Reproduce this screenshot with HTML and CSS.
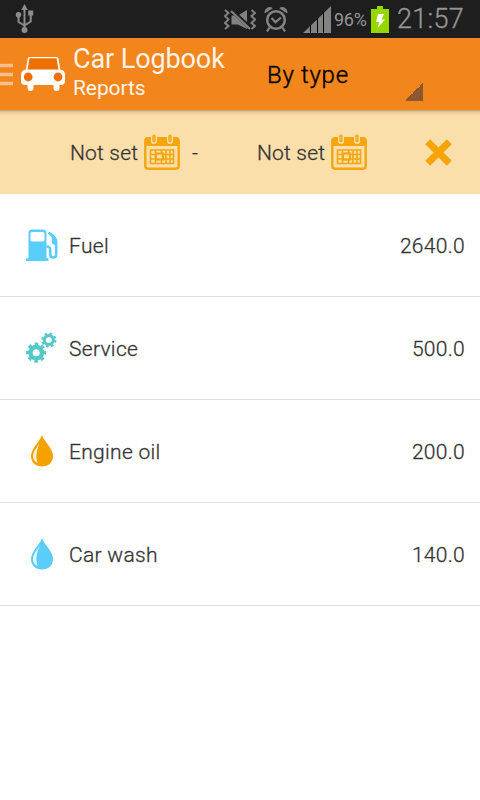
FILE: index.html
```html
<!DOCTYPE html>
<html lang="en">
<head>
    <meta charset="UTF-8">
    <meta name="viewport" content="width=device-width, initial-scale=1.0">
    <title>Car Logbook</title>
    <link rel="stylesheet" href="styles.css">
</head>
<body>
    <!-- Shared icons -->
    <svg class="icon_defs" width="0" height="0">
        <symbol id="calendar" viewBox="0 0 36 36">
            <rect x="1.3" y="4.3" width="33.4" height="30.4" rx="2.6" fill="none" stroke="#f5a60c" stroke-width="2.4"/>
            <path d="M1 12V6.500a3 3 0 0 1 3-3h28a3 3 0 0 1 3 3V12z" fill="#f5a60c"/>
            <path d="M10 2.500v4.500M26 2.500v4.500" stroke="#fbdfab" stroke-width="6" stroke-linecap="round"/>
            <path d="M10 2.300v4.300M26 2.300v4.300" stroke="#f5a60c" stroke-width="3.400" stroke-linecap="round"/>
            <path d="M10 3v3M26 3v3" stroke="#fbdfab" stroke-width=".6" stroke-linecap="round"/>
            <path d="M6.500 16h23v13.500h-23zM6.500 20.500h23M6.500 25h23M11.500 16v13.500M17.500 16v13.500M22 16v13.500M26 16v13.500" fill="none" stroke="#f5a60c" stroke-width="1.600"/>
            <rect x="12" y="19.500" width="7" height="6" fill="#fbdfab" stroke="#f5a60c" stroke-width="2.200"/>
        </symbol>
        <symbol id="drop" viewBox="0 0 22 32">
            <path d="M11 .3C9 6.500 0 13.500 0 21 0 27.500 4.800 31.500 11 31.500S22 27.500 22 21C22 13.500 13 6.500 11 .3z" fill="currentColor"/>
            <path d="M9 7.500C6.500 12 2 16 2 21.200c0 3.200 1.700 5.500 4.600 6.700-2.400-6-1-13.200 2.400-20.400z" fill="#fff" opacity=".85"/>
        </symbol>
    </svg>

    <!-- Status bar -->
    <div class="status_bar">
        <svg class="usb" width="20" height="30" viewBox="0 0 20 30">
            <path d="M9.500 5v20M9.500 21.500L3.500 18v-7M9.500 21.500L15.700 17.500V10" fill="none" stroke="#8c8c8c" stroke-width="2"/>
            <path d="M9.500 0l3.300 6H6.200z" fill="#8c8c8c"/>
            <circle cx="9.500" cy="26" r="3" fill="#8c8c8c"/>
            <circle cx="3.500" cy="10.700" r="2.800" fill="#8c8c8c"/>
            <rect x="13.200" y="6.500" width="5" height="5" fill="#8c8c8c"/>
        </svg>
        <svg class="vibrate" width="32" height="22" viewBox="0 0 32 22">
            <path d="M1 1l3.500 3L1 7l3.500 3.500L1 14l3.500 3L1 20M27.500 1L31 4l-3.500 3 3.500 3.500-3.500 3.500 3.500 3-3.500 3" fill="none" stroke="#828282" stroke-width="2"/>
            <path d="M7.500 6.500H14L23 1v19l-9-4.500H7.500z" fill="#828282"/>
            <path d="M8.500 2.200l17 16" stroke="#1e1e1e" stroke-width="4"/>
            <path d="M7 2l19 18" stroke="#828282" stroke-width="2.200"/>
        </svg>
        <svg class="alarm" width="24" height="27" viewBox="0 0 24 27">
            <circle cx="12" cy="14" r="8.800" fill="none" stroke="#828282" stroke-width="2.600"/>
            <path d="M7.500 12l4 4.200 5.500-4.700M5.500 21.500L3 25.500M18.500 21.500l2.500 4" fill="none" stroke="#828282" stroke-width="2.200"/>
            <path d="M.8 7.500A5 5 0 0 1 8.800 2.300zM23.200 7.500A5 5 0 0 0 15.200 2.300z" fill="#828282"/>
        </svg>
        <svg class="signal" width="28" height="27" viewBox="0 0 28 27">
            <path d="M0 27L28 0v27z" fill="#828282"/>
            <path d="M7.500 19v8M14.500 12v15M20.500 6v21" stroke="#000" stroke-width="1"/>
        </svg>
        <span class="percent">96%</span>
        <svg class="battery" width="18" height="27" viewBox="0 0 18 27">
            <path d="M6 0h6v3h6v24H0V3h6z" fill="#97d700"/>
            <path d="M7 8h6l-2.500 5.500H14L6.500 22l1.700-6H5z" fill="#fff"/>
        </svg>
        <span class="time">21:57</span>
    </div>

    <!-- Action bar -->
    <header>
        <svg class="menu" width="13" height="24" viewBox="0 0 13 24">
            <path d="M0 2.500h13M0 11.500h13M0 20.500h13" stroke="#f8c08f" stroke-width="3.600"/>
        </svg>
        <svg class="car" width="44" height="34" viewBox="0 0 44 34">
            <path d="M9 0h26.500a2 2 0 0 1 2 1.600l1.700 10.900a5 5 0 0 1 4.800 5V24a4 4 0 0 1-4 4h-1.500v3a3 3 0 0 1-6 0v-3H12.500v3a3 3 0 0 1-6 0v-3H4a4 4 0 0 1-4-4v-6.500a5 5 0 0 1 4.800-5L6.800 1.600A2 2 0 0 1 9 0z" fill="#fff"/>
            <path d="M8.500 1.300h27l2 11.200H6.500z" fill="#ee6f02"/>
            <circle cx="7.200" cy="20" r="4.400" fill="#ee6f02"/>
            <circle cx="37" cy="20" r="4.400" fill="#ee6f02"/>
        </svg>
        <div class="titles">
            <h1>Car Logbook</h1>
            <h2>Reports</h2>
        </div>
        <div class="spinner">
            <span>By type</span>
        </div>
    </header>

    <!-- Date range -->
    <section class="date_range">
        <div class="date from">
            <span>Not set</span>
            <svg width="36" height="36"><use href="#calendar"/></svg>
        </div>
        <span class="dash">-</span>
        <div class="date to">
            <span>Not set</span>
            <svg width="36" height="36"><use href="#calendar"/></svg>
        </div>
        <svg class="clear" width="27" height="27" viewBox="0 0 27 27">
            <path d="M2.700 2.700l21.600 21.600M24.300 2.700L2.700 24.300" stroke="#f6a406" stroke-width="7"/>
        </svg>
    </section>

    <!-- Totals by type -->
    <ul class="report">
        <li>
            <svg class="icon" width="32" height="32" viewBox="0 0 32 32">
                <path d="M2.500 29V4A3.500 3.500 0 0 1 6 .5h11A3.500 3.500 0 0 1 20.500 4v25l2 .5V32H0v-2.500z" fill="#5bcdfb"/>
                <rect x="4.500" y="3" width="14" height="9.500" rx="1.500" fill="#fff"/>
                <path d="M20.500 17.500c3 0 3.700 1 3.700 3.500v4.500c0 4 6 4 6 0V14c0-4-1.500-5.500-3.500-7.500L22.500 3.500" fill="none" stroke="#5bcdfb" stroke-width="2.600"/>
                <path d="M22 3l9 8.500v6l-5.200-3.200V9z" fill="#5bcdfb"/>
            </svg>
            <span class="name">Fuel</span>
            <span class="total">2640.0</span>
        </li>
        <li>
            <svg class="icon" width="32" height="32" viewBox="0 0 32 32">
                <circle cx="10.200" cy="20.700" r="5.700" fill="none" stroke="#55c8c8" stroke-width="4.400"/>
                <circle cx="10.200" cy="20.700" r="8.600" fill="none" stroke="#55c8c8" stroke-width="3" stroke-dasharray="3.500 3.255" stroke-dashoffset="1.750"/>
                <circle cx="22.800" cy="8" r="4.500" fill="none" stroke="#55c8c8" stroke-width="3"/>
                <circle cx="22.800" cy="8" r="6.400" fill="none" stroke="#55c8c8" stroke-width="2.400" stroke-dasharray="2.500 2.527"/>
            </svg>
            <span class="name">Service</span>
            <span class="total">500.0</span>
        </li>
        <li>
            <svg class="icon oil" width="32" height="32"><use href="#drop"/></svg>
            <span class="name">Engine oil</span>
            <span class="total">200.0</span>
        </li>
        <li>
            <svg class="icon water" width="32" height="32"><use href="#drop"/></svg>
            <span class="name">Car wash</span>
            <span class="total">140.0</span>
        </li>
    </ul>
</body>
</html>
```
FILE: styles.css
```css
body {
    font-family: Roboto, sans-serif;
    background-color: #fff;
    color: #333;
    margin: 0;
    padding: 0;
    height: 800px;
    overflow: hidden;
}

.icon_defs {
    display: block;
}

svg {
    flex-shrink: 0;
}

.status_bar {
    display: flex;
    align-items: center;
    box-sizing: border-box;
    height: 38px;
    padding: 0 0 0 15px;
    background-color: #1e1e1e;
    color: #969696;
}

.vibrate {
    margin-left: 189px;
    margin-top: 2px;
}

.alarm {
    margin-left: 8px;
}

.signal {
    margin-left: 15px;
}

.percent {
    width: 37px;
    margin-left: 3px;
    font-size: 18px;
    letter-spacing: -0.3px;
}

.time {
    margin-left: 8px;
    font-size: 27px;
    font-weight: 300;
    letter-spacing: 0.3px;
    -webkit-text-stroke: 0.3px;
}

header {
    display: flex;
    align-items: center;
    box-sizing: border-box;
    height: 72px;
    background-color: #f2851b;
    color: #fff3ea;
}

.menu {
    margin-top: 2px;
}

.car {
    margin-left: 8px;
}

.titles {
    width: 194px;
    margin-left: 8px;
    margin-top: -5px;
}

h1, h2 {
    margin: 0;
    font-weight: 400;
    white-space: nowrap;
}

h1 {
    font-size: 27px;
    line-height: 32px;
    letter-spacing: -0.1px;
}

h2 {
    font-size: 21px;
    line-height: 26px;
    letter-spacing: -0.1px;
}

.spinner {
    display: flex;
    align-items: center;
    box-sizing: border-box;
    width: 156px;
    height: 54px;
    color: #000;
    font-size: 24px;
    font-weight: 300;
    letter-spacing: 0.7px;
    -webkit-text-stroke: 0.4px;
    background: linear-gradient(135deg, transparent 50%, #8a5730 50%) right bottom / 18px 18px no-repeat;
}

.spinner span {
    padding-top: 2px;
}

.date_range {
    display: flex;
    align-items: center;
    box-sizing: border-box;
    height: 84px;
    padding-left: 70px;
    background: linear-gradient(#bd9f72, #e9cb98 2px, #fbdfab 6px);
    font-size: 21px;
    font-weight: 300;
    letter-spacing: 0.2px;
    -webkit-text-stroke: 0.3px;
}

.date {
    display: flex;
    align-items: center;
    justify-content: space-between;
    width: 110px;
}

.date span, .dash {
    padding-top: 2px;
}

.dash {
    width: 65px;
    margin-left: 12px;
}

.clear {
    margin-left: 58px;
}

.report {
    list-style: none;
    margin: 0;
    padding: 0;
    font-size: 21px;
    font-weight: 300;
    letter-spacing: 0.3px;
    -webkit-text-stroke: 0.3px;
}

.report li {
    display: flex;
    align-items: center;
    box-sizing: border-box;
    height: 103px;
    padding: 0 15px 0 26px;
    border-bottom: 1px solid #e0e0e0;
}

.name, .total {
    padding-top: 1px;
}

.name {
    flex: 1;
    margin-left: 11px;
}

.oil {
    color: #f3a200;
}

.water {
    color: #5bcdfb;
}
```
